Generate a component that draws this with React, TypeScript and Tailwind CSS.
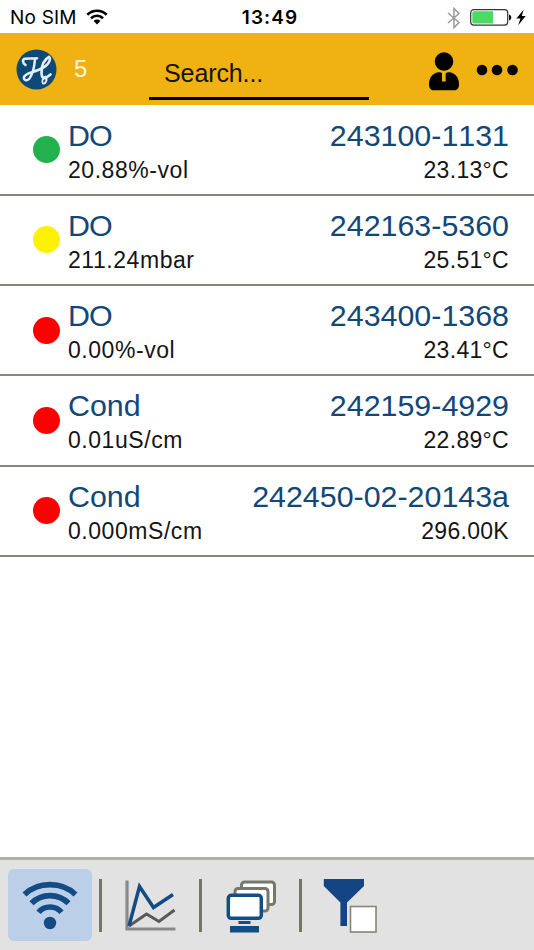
import React from "react";

type Sensor = {
  id: string;
  tipo: string;
  valor: string;
  temperatura: string;
  color: string;
};

const sensores: Sensor[] = [
  { id: "243100-1131", tipo: "DO", valor: "20.88%-vol", temperatura: "23.13°C", color: "bg-[#22b14c]" },
  { id: "242163-5360", tipo: "DO", valor: "211.24mbar", temperatura: "25.51°C", color: "bg-[#fff200]" },
  { id: "243400-1368", tipo: "DO", valor: "0.00%-vol", temperatura: "23.41°C", color: "bg-[#ff0000]" },
  { id: "242159-4929", tipo: "Cond", valor: "0.01uS/cm", temperatura: "22.89°C", color: "bg-[#ff0000]" },
  { id: "242450-02-20143a", tipo: "Cond", valor: "0.000mS/cm", temperatura: "296.00K", color: "bg-[#ff0000]" },
];

const StatusBar = () => (
  <div className="h-[33px] shrink-0 flex items-center justify-between bg-white pl-[10px] pr-[8px] pt-[2px] font-['Inter','Liberation_Sans',sans-serif] text-black">
    <div className="flex-1 flex items-center">
      <span className="text-[19px] leading-6 tracking-[0.2px]">No SIM</span>
      <svg className="ml-[9px] mb-[2px]" width="22" height="16" viewBox="0 0 22 16" fill="none">
        <path d="M1.3 5.7a14 14 0 0 1 19.4 0" stroke="#000" strokeWidth="2.6" />
        <path d="M5 9.2a8.7 8.7 0 0 1 12 0" stroke="#000" strokeWidth="2.6" />
        <path d="M11 15.4 7.6 12a4.8 4.8 0 0 1 6.8 0Z" fill="#000" />
      </svg>
    </div>
    <span className="ml-[4px] text-[19px] leading-6 font-semibold tracking-[1.1px]">13:49</span>
    <div className="flex-1 flex items-center justify-end">
      <svg className="mr-[9px]" width="14" height="22" viewBox="0 0 14 22" fill="none">
        <path d="M1 6 12 15.5 7 20.5V1.5L12 6.5 1 16" stroke="#999" strokeWidth="1.5" />
      </svg>
      <svg width="42" height="17" viewBox="0 0 42 17">
        <rect x="0.7" y="0.7" width="37" height="15.4" rx="3" fill="#fff" stroke="#333" strokeWidth="1.2" />
        <path d="M4 2.3h19v12.2H4a1.7 1.7 0 0 1-1.7-1.7V4A1.7 1.7 0 0 1 4 2.3Z" fill="#4cd964" />
        <path d="M39 5.5c3 .7 3 5.3 0 6Z" fill="#000" />
      </svg>
      <svg className="ml-[4px]" width="10" height="17" viewBox="0 0 10 17">
        <path d="M7.8 0.5 0.4 9.4h4L2.2 16.2 9.7 7h-4Z" fill="#000" />
      </svg>
    </div>
  </div>
);

const Header = () => (
  <header className="h-[72px] shrink-0 flex items-start bg-[#f0b212] pl-[16px] pr-[15px]">
    <svg className="mt-[16px]" width="41" height="41" viewBox="0 0 41 41" fill="none">
      <circle cx="20.5" cy="20.5" r="20" fill="#0d4a78" />
      {/* Monograma H */}
      <g stroke="#e4eefa" strokeLinecap="round" strokeLinejoin="round">
        <path d="M9.5 16C6.5 14 6 10.5 9 9.8c4-.8 8 .2 12-.6" strokeWidth="2.6" />
        <path d="M19 10c-.5 7-1.5 14-5.500 19.500-2.500 3-6.500 1.500-5.500-1.500 1.500-4 8-4.500 13-6.500 5-1.800 11-5 12.500-9.500.7-2 .3-3.500-.5-4" strokeWidth="2.5" />
        <path d="M33 8c-5 2.500-7.500 9-7.500 16 0 5 2.500 6 5 4.500l4-3" strokeWidth="2.7" />
        <path d="M29.500 27.500c-3 2-4 5-2.500 7 2.500.5 4.500-3 3-6.500" strokeWidth="1.8" />
      </g>
    </svg>
    <span className="ml-[17px] mt-[21px] w-[20px] text-[24px] leading-[30px] text-[#fff6d8]">5</span>
    <div className="ml-[55px] mt-[22px] w-[220px] h-[45px] border-b-[3px] border-black">
      <input
        className="block w-full pl-[15px] pt-px text-[25px] leading-[34px] h-[34px] tracking-[-0.1px] text-black placeholder:text-[#171205] placeholder:opacity-100 bg-transparent outline-none"
        placeholder="Search..."
      />
    </div>
    <svg className="ml-auto mt-[18px]" width="32" height="40" viewBox="0 0 32 40">
      <circle cx="16" cy="10.5" r="9.3" fill="#000" />
      <path d="M9 21.5c2.500-.7 4.500 0 5 .7v8.300h3.700v-8.300c1.300-.9 3.300-1.300 5.300-.6 5.500 1.700 8 6.400 8 11.400 0 4-1.500 6.300-5 6.300H6c-3.500 0-5-2.300-5-6.300 0-5 2.500-9.800 8-11.500Z" fill="#000" />
    </svg>
    <svg className="ml-[16px] mt-[31px]" width="43" height="12" viewBox="0 0 43 12" fill="#000">
      <circle cx="6" cy="6" r="5.3" />
      <circle cx="21" cy="6" r="5.3" />
      <circle cx="36.5" cy="6" r="5.3" />
    </svg>
  </header>
);

const SensorRow = ({ sensor }: { sensor: Sensor }) => (
  <li className="h-[90.3px] flex items-start border-b-2 border-[#888682] pl-[33px] pr-[25px]">
    <span className={`mt-[30.7px] size-[27px] shrink-0 rounded-full ${sensor.color}`} />
    <div className="ml-[8px] flex-1 flex flex-col pt-[13px]">
      <div className="flex justify-between text-[30.4px] leading-[33px] text-[#114779] [font-kerning:none]">
        <span className={sensor.tipo === "DO" ? "tracking-[-1px]" : ""}>{sensor.tipo}</span>
        <span>{sensor.id}</span>
      </div>
      <div className="flex justify-between text-[23px] leading-[37px] text-[#151515]">
        <span className="tracking-[0.55px]">{sensor.valor}</span>
        <span className="tracking-[0.3px]">{sensor.temperatura}</span>
      </div>
    </div>
  </li>
);

const Separator = () => <span className="w-[3px] h-[53px] bg-[#737567]" />;

const TabBar = () => (
  <nav className="h-[93px] shrink-0 flex items-start border-t-[3px] border-[#b0afab] bg-[#e2e2e2] pl-[8px]">
    <button className="mt-[9px] w-[84px] h-[72px] rounded-[6px] bg-[#bccfe8] flex justify-center">
      <svg className="mt-[12px]" width="56" height="50" viewBox="0 0 56 50" fill="none" stroke="#134b84" strokeWidth="5.6">
        <path d="M2.5 13.5C16 .3 40 .3 53.5 13.5" />
        <path d="M9.5 22.3C19.5 12 36.5 12 46.5 22.3" />
        <path d="M16.5 31.3C22.5 24.3 33.5 24.3 39.5 31.3" />
        <circle cx="28" cy="42" r="6.2" fill="#134b84" stroke="none" />
      </svg>
    </button>
    <div className="mt-[19px] flex items-start">
      <span className="w-[7px]" />
      <Separator />
      <button className="ml-[23px]">
        <svg width="52" height="53" viewBox="0 0 52 53" fill="none">
          <path d="M2 1.5v48.5h48.5" stroke="#898989" strokeWidth="3.2" />
          <path d="m4 47 17.5-12L34 42.5 49.5 31" stroke="#595959" strokeWidth="3" />
          <path d="M4 47 14.5 7.5 28.5 28.5 48 15.5" stroke="#134b84" strokeWidth="3.5" />
        </svg>
      </button>
      <span className="w-[22px]" />
      <Separator />
      <button className="ml-[24px]">
        <svg width="51" height="54" viewBox="0 0 51 54" fill="#fff">
          <rect x="15.5" y="3" width="33" height="22.5" rx="3" stroke="#77786c" strokeWidth="3" />
          <rect x="9" y="9.5" width="33" height="22.5" rx="3" stroke="#77786c" strokeWidth="3" />
          <rect x="2.3" y="16.3" width="33" height="23" rx="3" stroke="#124d84" strokeWidth="3.5" />
          <path d="M12.5 42h12v3h-12zM4 47h29v6.5H4z" fill="#124d84" />
        </svg>
      </button>
      <span className="w-[22px]" />
      <Separator />
      <button className="ml-[21px]">
        <svg width="56" height="54" viewBox="0 0 56 54">
          <path d="M.8 0h40.2v7L24 23.5V47h-6.600V23.5L.8 7Z" fill="#134484" />
          <rect x="27.5" y="27.5" width="25.5" height="25.5" fill="#fff" stroke="#858579" strokeWidth="1.6" />
        </svg>
      </button>
    </div>
  </nav>
);

const App = () => {
  return (
    <div className="w-[534px] h-[950px] flex flex-col overflow-hidden bg-white font-['Liberation_Sans',Arial,sans-serif]">
      <StatusBar />
      <Header />
      <ul className="flex-1 min-h-0 pt-[0.5px]">
        {sensores.map((sensor) => (
          <SensorRow key={sensor.id} sensor={sensor} />
        ))}
      </ul>
      <TabBar />
    </div>
  );
};

export default App;
